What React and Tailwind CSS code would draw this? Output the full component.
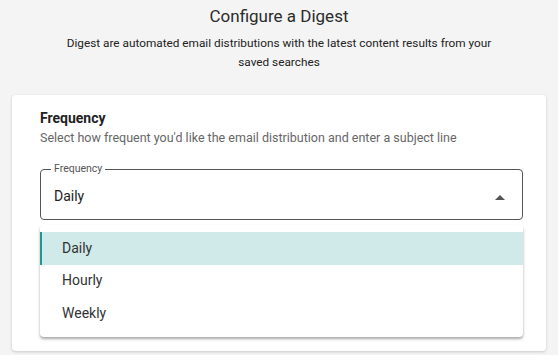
const options = ['Daily', 'Hourly', 'Weekly'];

export default function App() {
  return (
    <div
      className="w-[558px] h-[355px] overflow-hidden bg-[#f4f4f4] text-[#333]"
      style={{ fontFamily: 'Roboto, "Liberation Sans", sans-serif' }}
    >
      <div className="flex flex-col items-center pt-[5px]">
        <h1 className="text-[17px] leading-[22px] text-[#2b2b2b]">Configure a Digest</h1>
        <p className="mt-[7px] w-[440px] text-center text-[11.8px] leading-[19px] text-[#222]">
          Digest are automated email distributions with the latest content results from your saved searches
        </p>
      </div>

      <div className="mx-3 mt-[23px] h-[256px] rounded-[4px] bg-white px-7 pt-[14px] shadow-[0_1px_3px_rgba(0,0,0,0.18)]">
        <h2 className="text-[14px] font-bold leading-[18px] text-[#222]">Frequency</h2>
        <p className="mt-[3px] text-[12.5px] leading-[16px] text-[#666]">
          Select how frequent you'd like the email distribution and enter a subject line
        </p>

        <fieldset className="relative mt-[18px] h-[56px] w-[483px] rounded-[4px] border border-[#555] px-[10px]">
          <legend className="px-[3px] text-[10.5px] leading-[10px] text-[#555]">Frequency</legend>
          <div className="flex items-center justify-between pt-[12px] pl-[3px] pr-[7px]">
            <span className="text-[14px] text-[#222]">Daily</span>
            <svg width="10" height="5" viewBox="0 0 10 5" className="mt-[1px]">
              <path d="M0 5 L5 0 L10 5 Z" fill="#555" />
            </svg>
          </div>
        </fieldset>

        <ul className="mt-[5px] w-[483px] rounded-[4px] bg-white py-[7px] shadow-[0_2px_3px_rgba(0,0,0,0.35)]">
          {options.map((o, i) => (
            <li
              key={o}
              className={`flex h-[32.5px] items-center text-[14px] text-[#333] ${
                i === 0 ? 'border-l-2 border-[#1b9a98] bg-[#d0eaea] pl-[20px]' : 'pl-[22px]'
              }`}
            >
              {o}
            </li>
          ))}
        </ul>
      </div>
    </div>
  );
}
